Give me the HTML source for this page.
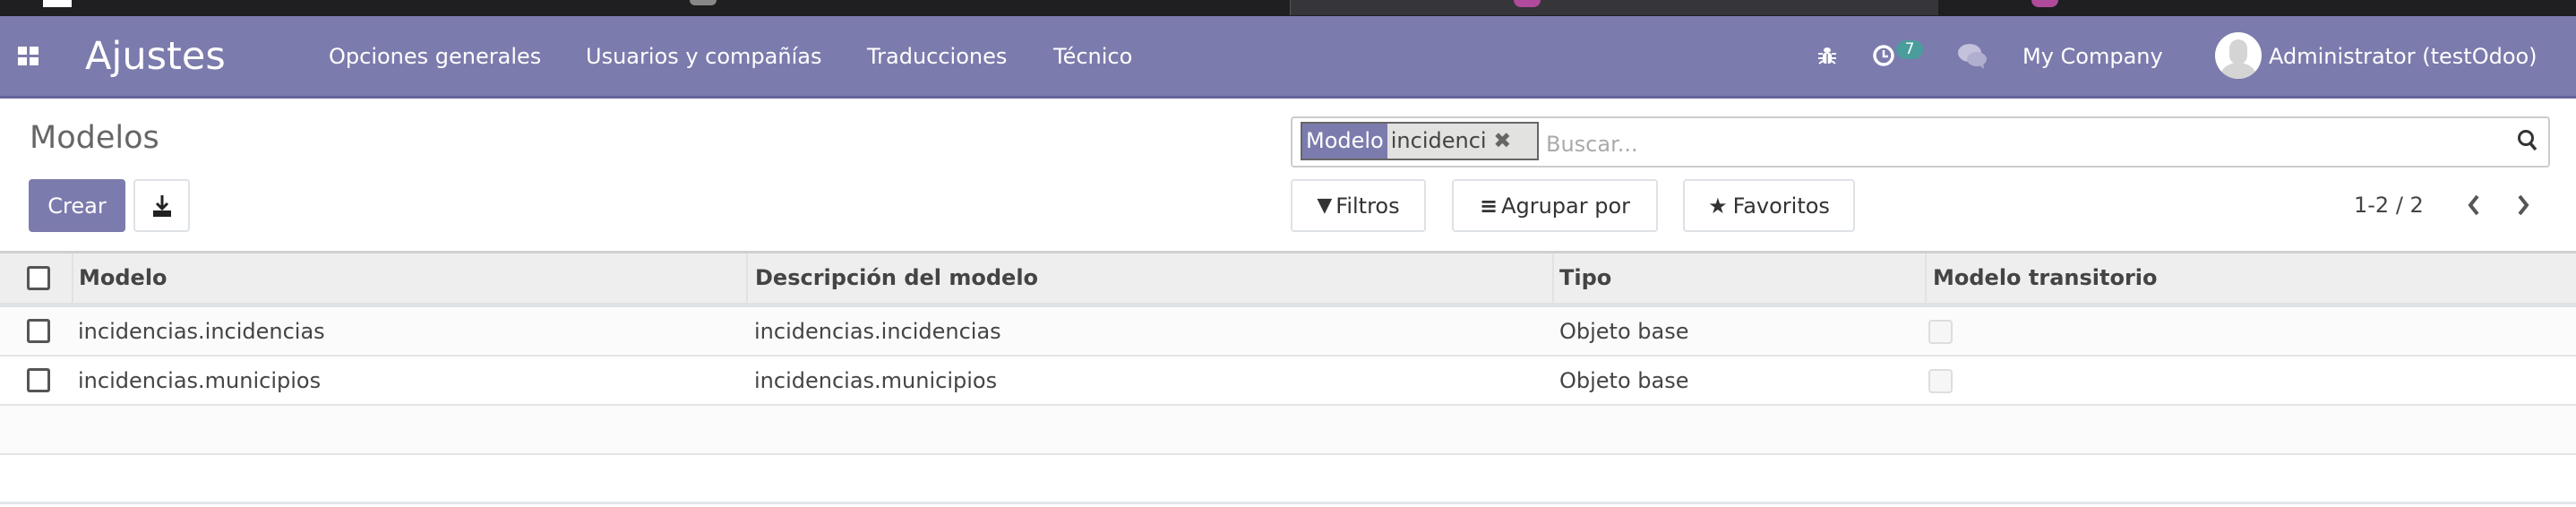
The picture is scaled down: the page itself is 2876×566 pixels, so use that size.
<!DOCTYPE html>
<html><head><meta charset="utf-8"><style>
*{box-sizing:border-box;margin:0;padding:0}
body{width:2876px;height:566px;overflow:hidden;background:#fff;font-family:"DejaVu Sans","Liberation Sans",sans-serif;color:#4c4c4c;position:relative}
.a{position:absolute;white-space:nowrap}
.top{left:0;top:0;width:2876px;height:18px;background:#1f1f21}
.nav{left:0;top:18px;width:2876px;height:92px;background:#7c7bad;border-bottom:3px solid #65649a}
.nt{color:#fff;font-size:24px;top:49px}
.btn{border:2px solid #dee2e6;border-radius:4px;background:#fff;height:59px;top:200px;font-size:24px;color:#333;display:flex;align-items:center;justify-content:center}
.cb{width:26px;height:27px;border:3px solid #555;border-radius:3px;background:#fff}
.th{font-weight:bold;font-size:24px;color:#444;top:296px}
.td{font-size:24px;color:#444}
.vl{width:2px;background:#e2e2e2;top:283px;height:55px}
</style></head><body>
<div class="a top"></div>
<div class="a" style="left:1440px;top:0;width:724px;height:17px;background:#36353a;border-left:1px solid #555"></div>
<div class="a" style="left:48px;top:0;width:32px;height:8px;background:#fff"></div>
<div class="a" style="left:770px;top:0;width:30px;height:6px;background:#888;border-radius:0 0 15px 15px"></div>
<div class="a" style="left:1690px;top:0;width:30px;height:8px;background:#b04a9a;border-radius:0 0 15px 15px"></div>
<div class="a" style="left:2268px;top:0;width:30px;height:8px;background:#b04a9a;border-radius:0 0 15px 15px"></div>
<div class="a nav"></div>
<svg class="a" style="left:20px;top:52px" width="26" height="22"><rect x="0" y="0" width="10" height="9" fill="#fff"/><rect x="13" y="0" width="10" height="9" fill="#fff"/><rect x="0" y="12" width="10" height="9" fill="#fff"/><rect x="13" y="12" width="10" height="9" fill="#fff"/></svg>
<div class="a" style="left:95px;top:38px;color:#fff;font-size:43px">Ajustes</div>
<div class="a nt" style="left:367px">Opciones generales</div>
<div class="a nt" style="left:654px">Usuarios y compañías</div>
<div class="a nt" style="left:968px">Traducciones</div>
<div class="a nt" style="left:1176px">Técnico</div>
<svg class="a" style="left:2028px;top:50px" width="24" height="24" viewBox="0 0 24 24"><ellipse cx="12" cy="6" rx="4" ry="3" fill="#fff"/><rect x="7" y="9" width="10" height="12" rx="3" fill="#fff"/><path d="M2 10h5M17 10h5M2 15h5M17 15h5M3 21l4-3M21 21l-4-3" stroke="#fff" stroke-width="2"/><path d="M12 10v11" stroke="#7c7bad" stroke-width="1.5"/></svg>
<svg class="a" style="left:2090px;top:48px" width="26" height="28" viewBox="0 0 26 28"><circle cx="13" cy="14" r="10" fill="none" stroke="#fff" stroke-width="3.5"/><path d="M13 8v7h5" stroke="#fff" stroke-width="2.5" fill="none"/></svg>
<div class="a" style="left:2117px;top:45px;width:30px;height:21px;border-radius:11px;background:#4a9d9c;color:#fff;font-size:17px;text-align:center;line-height:20px">7</div>
<svg class="a" style="left:2185px;top:48px" width="34" height="30" viewBox="0 0 34 30"><ellipse cx="14" cy="11" rx="13" ry="10" fill="#c3c1dc"/><ellipse cx="22" cy="18" rx="11" ry="8" fill="#b1afd0"/><path d="M24 24l6 5-1-7z" fill="#b1afd0"/></svg>
<div class="a nt" style="left:2258px">My Company</div>
<div class="a" style="left:2473px;top:36px;width:52px;height:52px;border-radius:50%;background:#fff;overflow:hidden"><div style="position:absolute;left:16px;top:8px;width:20px;height:28px;border-radius:10px;background:#d4d4d4"></div><div style="position:absolute;left:6px;top:34px;width:40px;height:30px;border-radius:50%;background:#d4d4d4"></div></div>
<div class="a nt" style="left:2533px">Administrator (testOdoo)</div>

<div class="a" style="left:33px;top:134px;font-size:35px;color:#666">Modelos</div>
<div class="a btn" style="left:32px;width:108px;background:#7c7bad;border-color:#7c7bad;color:#fff">Crear</div>
<div class="a btn" style="left:149px;width:63px"><svg width="22" height="24" viewBox="0 0 22 24"><path d="M11 0v14M5 9l6 6 6-6" stroke="#222" stroke-width="3" fill="none"/><rect x="1" y="17" width="20" height="7" fill="#222"/></svg></div>

<div class="a" style="left:1441px;top:130px;width:1406px;height:57px;border:2px solid #ccc;border-radius:4px"></div>
<div class="a" style="left:1452px;top:136px;width:266px;height:43px;border:2px solid #666;background:#e2e2e0;display:flex;font-size:24px">
<div style="background:#7c7bad;color:#fff;padding:0 4px;line-height:39px">Modelo</div>
<div style="padding:0 4px;line-height:39px;color:#444">incidenci <span style="color:#666;font-weight:bold">✖</span></div></div>
<div class="a" style="left:1726px;top:147px;font-size:24px;color:#aaa">Buscar...</div>
<svg class="a" style="left:2810px;top:144px" width="24" height="26" viewBox="0 0 24 26"><circle cx="10" cy="10" r="7.5" fill="none" stroke="#333" stroke-width="3"/><path d="M15 16l6 7" stroke="#333" stroke-width="3.5"/></svg>

<div class="a btn" style="left:1441px;width:151px"><span style="font-size:22px;margin-right:4px">▼</span>Filtros</div>
<div class="a btn" style="left:1621px;width:230px"><span style="margin-right:4px;font-weight:bold">≡</span>Agrupar por</div>
<div class="a btn" style="left:1879px;width:192px"><span style="margin-right:6px">★</span>Favoritos</div>
<div class="a" style="left:2628px;top:215px;font-size:24px;color:#444">1-2 / 2</div>
<svg class="a" style="left:2754px;top:216px" width="16" height="26" viewBox="0 0 16 26"><path d="M12 3L4 13l8 10" stroke="#555" stroke-width="4" fill="none"/></svg>
<svg class="a" style="left:2809px;top:216px" width="16" height="26" viewBox="0 0 16 26"><path d="M4 3l8 10-8 10" stroke="#555" stroke-width="4" fill="none"/></svg>

<div class="a" style="left:0;top:280px;width:2876px;height:3px;background:#cfcfcf"></div>
<div class="a" style="left:0;top:283px;width:2876px;height:55px;background:#eee"></div>
<div class="a" style="left:0;top:338px;width:2876px;height:5px;background:#dee2e6"></div>
<div class="a vl" style="left:80px"></div><div class="a vl" style="left:833px"></div><div class="a vl" style="left:1733px"></div><div class="a vl" style="left:2149px"></div>
<div class="a cb" style="left:30px;top:297px"></div>
<div class="a th" style="left:88px">Modelo</div>
<div class="a th" style="left:843px">Descripción del modelo</div>
<div class="a th" style="left:1741px">Tipo</div>
<div class="a th" style="left:2158px">Modelo transitorio</div>

<div class="a" style="left:0;top:343px;width:2876px;height:55px;background:#fbfbfb;border-bottom:2px solid #e2e5e8"></div>
<div class="a" style="left:0;top:398px;width:2876px;height:55px;background:#fff;border-bottom:2px solid #e2e5e8"></div>
<div class="a" style="left:0;top:453px;width:2876px;height:55px;background:#fbfbfb;border-bottom:2px solid #e2e5e8"></div>
<div class="a" style="left:0;top:508px;width:2876px;height:55px;background:#fff;border-bottom:3px solid #e2e5e8"></div>

<div class="a cb" style="left:30px;top:356px"></div>
<div class="a td" style="left:87px;top:356px">incidencias.incidencias</div>
<div class="a td" style="left:842px;top:356px">incidencias.incidencias</div>
<div class="a td" style="left:1741px;top:356px">Objeto base</div>
<div class="a" style="left:2153px;top:357px;width:27px;height:27px;border:2px solid #ddd;border-radius:4px;background:#f6f6f6"></div>

<div class="a cb" style="left:30px;top:411px"></div>
<div class="a td" style="left:87px;top:411px">incidencias.municipios</div>
<div class="a td" style="left:842px;top:411px">incidencias.municipios</div>
<div class="a td" style="left:1741px;top:411px">Objeto base</div>
<div class="a" style="left:2153px;top:412px;width:27px;height:27px;border:2px solid #ddd;border-radius:4px;background:#f6f6f6"></div>
</body></html>
